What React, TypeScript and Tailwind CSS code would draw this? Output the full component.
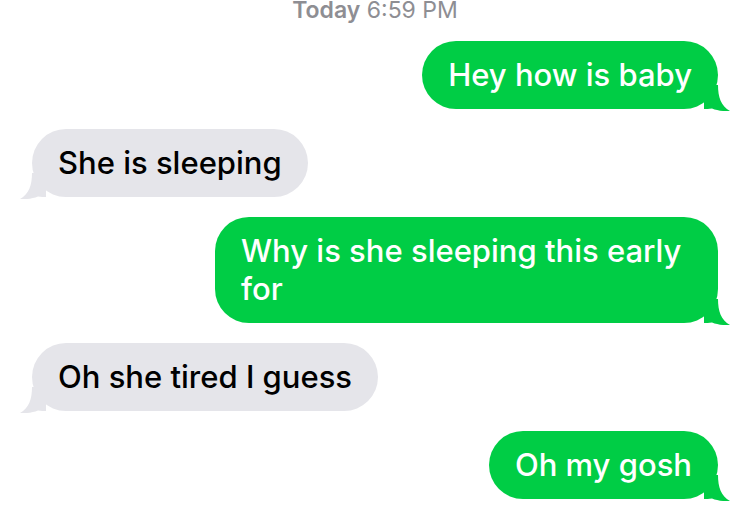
import type { ReactNode } from "react";

type Message = { id: number; text: string; fromMe: boolean };

const messages: Message[] = [
  { id: 1, text: "Hey how is baby", fromMe: true },
  { id: 2, text: "She is sleeping", fromMe: false },
  { id: 3, text: "Why is she sleeping this early for", fromMe: true },
  { id: 4, text: "Oh she tired I guess", fromMe: false },
  { id: 5, text: "Oh my gosh", fromMe: true },
];

// The little curl at the bottom corner of a bubble. Drawn for the right side,
// mirrored for incoming messages.
function Tail({ fromMe }: { fromMe: boolean }) {
  return (
    <svg
      viewBox="0 0 26 26"
      className={
        fromMe
          ? "absolute bottom-[-2px] right-[-12px] h-[26px] w-[26px] fill-[#00cd45]"
          : "absolute bottom-[-2px] left-[-12px] h-[26px] w-[26px] -scale-x-100 fill-[#e5e5ea]"
      }
    >
      <path d="M0 0H14C14 12 17 21 26 26C19 26.5 13 25.5 8 23.5C5 24 2 24 0 24Z" />
    </svg>
  );
}

function Bubble({ fromMe, children }: { fromMe: boolean; children: ReactNode }) {
  return (
    <div className={fromMe ? "flex justify-end" : "flex justify-start"}>
      <div
        className={
          fromMe
            ? "relative max-w-[503px] rounded-[34px] bg-[#00cd45] px-[26px] py-[15px] text-white"
            : "relative max-w-[503px] rounded-[34px] bg-[#e5e5ea] px-[26px] py-[15px] text-black"
        }
      >
        <Tail fromMe={fromMe} />
        <p className="relative text-[31px] leading-[38px] font-medium">{children}</p>
      </div>
    </div>
  );
}

export default function App() {
  return (
    <div className="h-[516px] w-[750px] overflow-hidden bg-white px-[32px] font-['Inter','Liberation_Sans',sans-serif]">
      <div className="h-[41px] text-center text-[23px] leading-[21px] text-[#8e8e93]">
        <span className="font-semibold">Today</span> 6:59 PM
      </div>
      <div className="flex flex-col gap-[20px]">
        {messages.map((message) => (
          <Bubble key={message.id} fromMe={message.fromMe}>
            {message.text}
          </Bubble>
        ))}
      </div>
    </div>
  );
}
